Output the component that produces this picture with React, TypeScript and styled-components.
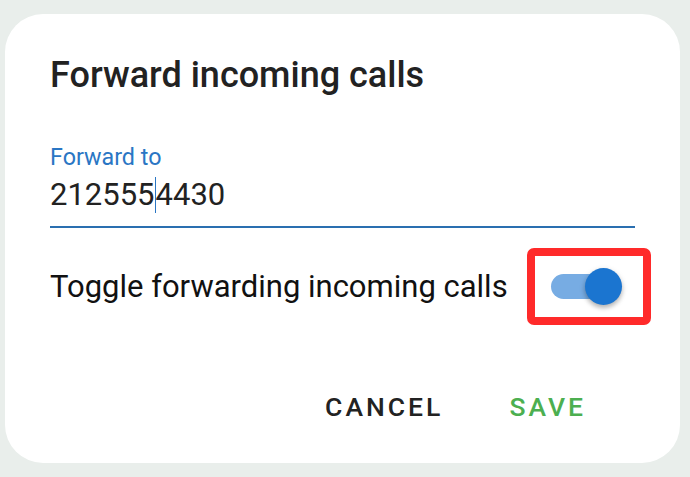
import React from "react";
import styled, { createGlobalStyle } from "styled-components";

const Global = createGlobalStyle`
  html, body { margin: 0; padding: 0; background: #e9eeeb; }
  body { font-family: Roboto, "Noto Sans", sans-serif; }
`;

const Page = styled.div`
  width: 690px;
  height: 477px;
  padding: 14px 0 0 5px;
  box-sizing: border-box;
`;

const Card = styled.div`
  width: 675px;
  height: 449px;
  background: #ffffff;
  border-radius: 38px;
  box-sizing: border-box;
  padding: 40px 45px 0;
  display: flex;
  flex-direction: column;
`;

const Title = styled.h2`
  margin: 0;
  font-size: 36px;
  font-weight: 500;
  line-height: 42px;
  color: #222222;
`;

const Field = styled.div`
  margin-top: 48px;
  width: 585px;
  border-bottom: 2px solid #2a6fb0;
  padding-bottom: 13px;
`;

const Label = styled.div`
  font-size: 23.3px;
  line-height: 27px;
  color: #2a76c4;
`;

const Value = styled.div`
  margin-top: 6px;
  font-size: 31px;
  line-height: 36px;
  color: #222222;
  display: flex;
  align-items: center;
`;

const Caret = styled.span`
  display: inline-block;
  width: 1px;
  height: 36px;
  background: #2a76c4;
`;

const ToggleRow = styled.div`
  margin-top: 20px;
  display: flex;
  align-items: center;
  gap: 19px;
`;

const ToggleLabel = styled.span`
  flex-shrink: 0;
  white-space: nowrap;
  font-size: 31px;
  line-height: 36px;
  color: #111111;
`;

const Highlight = styled.div`
  flex-shrink: 0;
  width: 124px;
  height: 77px;
  box-sizing: border-box;
  border: 8px solid #ff2a2a;
  border-radius: 7px;
  display: flex;
  align-items: center;
  padding-left: 16px;
`;

const Track = styled.div<{ $on: boolean }>`
  position: relative;
  width: 61px;
  height: 25px;
  border-radius: 13px;
  background: ${(p) => (p.$on ? "#77ace3" : "#bdbdbd")};
`;

const Thumb = styled.div<{ $on: boolean }>`
  position: absolute;
  top: -6px;
  left: ${(p) => (p.$on ? "34px" : "-8px")};
  width: 37px;
  height: 37px;
  border-radius: 50%;
  background: ${(p) => (p.$on ? "#1b75d0" : "#fafafa")};
  box-shadow: 0 3px 4px rgba(0, 0, 0, 0.2), 0 2px 6px rgba(0, 0, 0, 0.14);
`;

const Actions = styled.div`
  margin-top: auto;
  margin-bottom: 41px;
  display: flex;
  justify-content: flex-end;
  gap: 66px;
  padding-right: 49px;
`;

const ActionButton = styled.button<{ $tone: "neutral" | "positive" }>`
  border: none;
  background: none;
  padding: 0;
  font-family: Roboto, sans-serif;
  font-size: 26.5px;
  font-weight: 500;
  letter-spacing: 3px;
  color: ${(p) => (p.$tone === "positive" ? "#4caf50" : "#222222")};
  cursor: pointer;
`;

export default function App() {
  return (
    <Page>
      <Global />
      <Card>
        <Title>Forward incoming calls</Title>
        <Field>
          <Label>Forward to</Label>
          <Value>
            212555<Caret />4430
          </Value>
        </Field>
        <ToggleRow>
          <ToggleLabel>Toggle forwarding incoming calls</ToggleLabel>
          <Highlight>
            <Track $on>
              <Thumb $on />
            </Track>
          </Highlight>
        </ToggleRow>
        <Actions>
          <ActionButton $tone="neutral">CANCEL</ActionButton>
          <ActionButton $tone="positive">SAVE</ActionButton>
        </Actions>
      </Card>
    </Page>
  );
}
